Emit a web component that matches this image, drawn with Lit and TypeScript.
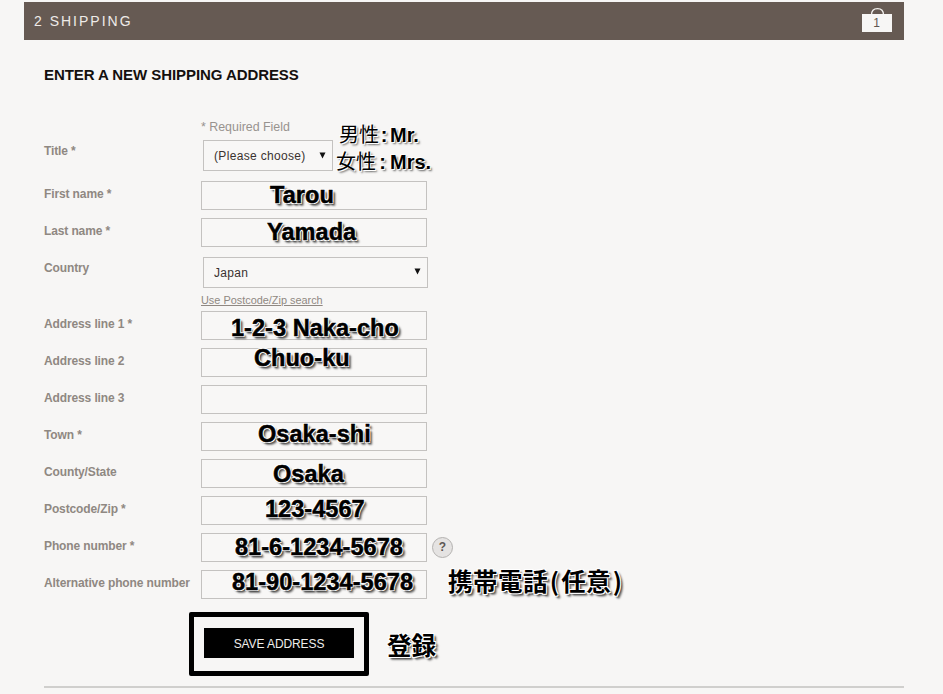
import { LitElement, html, css, nothing } from "lit";
import { customElement } from "lit/decorators.js";

interface Row { label: string; note?: string; x?: number; y?: number; help?: boolean }

const groupA: Row[] = [
  { label: "First name *", note: "Tarou", x: 69, y: 0 },
  { label: "Last name *", note: "Yamada", x: 66, y: 0 },
];
const groupB: Row[] = [
  { label: "Address line 1 *", note: "1-2-3 Naka-cho", x: 30, y: 3 },
  { label: "Address line 2", note: "Chuo-ku", x: 53, y: -4 },
  { label: "Address line 3" },
  { label: "Town *", note: "Osaka-shi", x: 57, y: -2 },
  { label: "County/State", note: "Osaka", x: 72, y: 1 },
  { label: "Postcode/Zip *", note: "123-4567", x: 64, y: -1 },
  { label: "Phone number *", note: "81-6-1234-5678", x: 34, y: 0, help: true },
  { label: "Alternative phone number", note: "81-90-1234-5678", x: 31, y: -2 },
];

@customElement("app-root")
export class AppRoot extends LitElement {
  static styles = css`
    :host {
      display: block;
      width: 943px;
      height: 694px;
      overflow: hidden;
      background: #f7f6f5;
      font-family: "Liberation Sans", Arial, sans-serif;
    }
    .page { padding: 2px 39px 0 24px; }
    .bar {
      height: 38px;
      background: #665a53;
      display: flex;
      align-items: center;
      justify-content: space-between;
      padding: 0 12px 0 10px;
    }
    .bar-title {
      color: #eeebe8;
      font-size: 14px;
      letter-spacing: 2px;
    }
    .bag { display: block; }
    .body { padding: 27px 0 0 20px; }
    h2 {
      margin: 0;
      font-size: 15px;
      line-height: 16px;
      font-weight: bold;
      letter-spacing: -0.07px;
      color: #14100e;
    }
    .required {
      margin: 37px 0 0 157px;
      font-size: 12.4px;
      line-height: 14px;
      color: #98938f;
    }
    .row { display: flex; align-items: flex-start; margin-bottom: 8px; }
    .row.sel { margin-bottom: 10px; }
    .row.before-sel { margin-bottom: 10px; }
    .title-row { margin-top: 6px; }
    .label {
      width: 157px;
      flex: none;
      padding-top: 6px;
      font-size: 12px;
      line-height: 14px;
      font-weight: bold;
      color: #8f8882;
      letter-spacing: -0.12px;
      white-space: nowrap;
    }
    .sel .label { padding-top: 4px; }
    .field { position: relative; width: 226px; height: 29px; flex: none; }
    input {
      display: block;
      width: 100%;
      height: 100%;
      box-sizing: border-box;
      margin: 0;
      border: 1px solid #c4c2c0;
      background: #f8f7f6;
      outline: none;
    }
    .select {
      position: relative;
      margin-left: 2px;
      flex: none;
    }
    .select select {
      display: block;
      box-sizing: border-box;
      width: 100%;
      height: 100%;
      appearance: none;
      -webkit-appearance: none;
      border: 1px solid #c4c2c0;
      border-radius: 0;
      background: #f8f7f6;
      padding: 0 0 0 10px;
      font: 12px "Liberation Sans", Arial, sans-serif;
      letter-spacing: 0.33px;
      color: #3a3230;
    }
    .select.short { width: 130px; height: 31px; }
    .select.long { width: 225px; height: 31px; }
    .arrow { position: absolute; top: 12px; right: 7px; pointer-events: none; }
    .select.long .arrow { top: 11px; right: 7px; }
    .link-line { margin: -4px 0 5px 157px; line-height: 12px; height: 12px; }
    a {
      font-size: 10.9px;
      line-height: 12px;
      color: #8f8882;
      text-decoration: underline;
      display: block;
      width: max-content;
    }
    .help {
      flex: none;
      box-sizing: border-box;
      width: 21px;
      height: 21px;
      margin: 4px 0 0 5px;
      border-radius: 50%;
      border: 1px solid #b4b2b0;
      background: #e5e3e2;
      color: #5d5855;
      font-size: 12px;
      font-weight: bold;
      line-height: 19px;
      text-align: center;
    }
    .note {
      position: absolute;
      z-index: 1;
      font-size: 23.6px;
      line-height: 28px;
      font-weight: bold;
      color: #000;
      white-space: nowrap;
      -webkit-text-stroke: 0.5px #000;
      text-shadow:
        -1px -1px 0 #fff, 1px -1px 0 #fff, -1px 1px 0 #fff, 1px 1px 0 #fff,
        2px 2px 2px rgba(40, 40, 40, 0.85), 3px 3px 2px rgba(40, 40, 40, 0.4);
    }
    .cjk { font-family: "Noto Sans CJK JP", "Liberation Sans", sans-serif; }
    .gender {
      position: absolute;
      z-index: 1;
      left: 133px;
      top: -20px;
      font-size: 20px;
      line-height: 27px;
      white-space: nowrap;
      color: #000;
      text-shadow: 1px 1px 0 #fff, -1px -1px 0 #fff, 2px 2px 2px rgba(40, 40, 40, 0.7);
    }
    .gender div { display: flex; align-items: baseline; height: 27px; }
    .gender .k { font-family: "Noto Sans CJK JP", sans-serif; font-weight: 400; width: 39px; }
    .gender .c { width: 15px; font-weight: bold; text-align: center; }
    .gender .m { font-weight: bold; font-size: 20px; }
    .gender .first { margin-left: 3px; }
    .gender .first .c { width: 12px; }
    .phone-note {
      left: 247px;
      top: -6px;
      font-size: 24.5px;
      line-height: 34px;
      font-weight: bold;
      font-feature-settings: "palt";
      letter-spacing: 0.5px;
      -webkit-text-stroke: 0;
    }
    .paren { margin: 0 1.7px; }
    .actions { display: flex; align-items: center; margin: 13px 0 0 145px; }
    .save-box {
      box-sizing: border-box;
      width: 180px;
      height: 64px;
      border: 5px solid #000;
      border-radius: 2px;
      padding: 11px 10px;
      flex: none;
    }
    button {
      display: block;
      width: 150px;
      height: 30px;
      border: 0;
      padding: 1px 0 0;
      background: #000;
      color: #efedeb;
      font: 12px "Liberation Sans", Arial, sans-serif;
      letter-spacing: -0.1px;
    }
    .reg-wrap { position: relative; width: 60px; height: 40px; margin-left: 18px; }
    .reg {
      left: 0;
      top: 4px;
      font-size: 24.5px;
      line-height: 34px;
      -webkit-text-stroke: 0;
    }
    hr {
      margin: 10px 0 0;
      border: 0;
      border-top: 2px solid #d0cfcd;
      height: 0;
    }
  `;

  private field(r: Row, rowClass = "") {
    return html`<div class="row ${rowClass}">
      <div class="label">${r.label}</div>
      <div class="field">
        <input type="text" aria-label=${r.label} />
        ${r.note
          ? html`<span class="note" style="left:${r.x}px;top:${r.y}px">${r.note}</span>`
          : nothing}
        ${r.label.startsWith("Alternative")
          ? html`<span class="note cjk phone-note">携帯電話<span class="paren">(</span>任意<span class="paren">)</span></span>`
          : nothing}
      </div>
      ${r.help ? html`<div class="help">?</div>` : nothing}
    </div>`;
  }

  private arrow() {
    return html`<svg class="arrow" width="7" height="7" viewBox="0 0 7 7">
      <path d="M0.5 0.5H6.5L3.5 6.5Z" fill="#111" />
    </svg>`;
  }

  render() {
    return html`<div class="page">
      <div class="bar">
        <span class="bar-title">2 SHIPPING</span>
        <svg class="bag" width="30" height="26" viewBox="0 0 30 26">
          <path d="M9.500 7C9.500 3 12 0.700 15.500 0.700S21.500 3 21.500 7" fill="none" stroke="#f4f2f0" stroke-width="1.300" />
          <rect x="0" y="6" width="30" height="18" fill="#f7f6f5" />
          <text x="14.500" y="19" text-anchor="middle" font-size="12" fill="#5f5650" font-family="Liberation Sans">1</text>
        </svg>
      </div>
      <div class="body">
        <h2>ENTER A NEW SHIPPING ADDRESS</h2>
        <div class="required">* Required Field</div>
        <div class="row sel title-row">
          <div class="label">Title *</div>
          <div class="select short">
            <select aria-label="Title"><option>(Please choose)</option></select>
            ${this.arrow()}
            <div class="gender">
              <div class="first"><span class="k">男性</span><span class="c">:</span><span class="m">Mr.</span></div>
              <div><span class="k">女性</span><span class="c">:</span><span class="m">Mrs.</span></div>
            </div>
          </div>
        </div>
        ${this.field(groupA[0])}
        ${this.field(groupA[1], "before-sel")}
        <div class="row sel">
          <div class="label">Country</div>
          <div class="select long">
            <select aria-label="Country"><option>Japan</option></select>
            ${this.arrow()}
          </div>
        </div>
        <div class="link-line"><a>Use Postcode/Zip search</a></div>
        ${groupB.map((r) => this.field(r))}
        <div class="actions">
          <div class="save-box"><button>SAVE ADDRESS</button></div>
          <div class="reg-wrap"><span class="note cjk reg">登録</span></div>
        </div>
        <hr />
      </div>
    </div>`;
  }
}
